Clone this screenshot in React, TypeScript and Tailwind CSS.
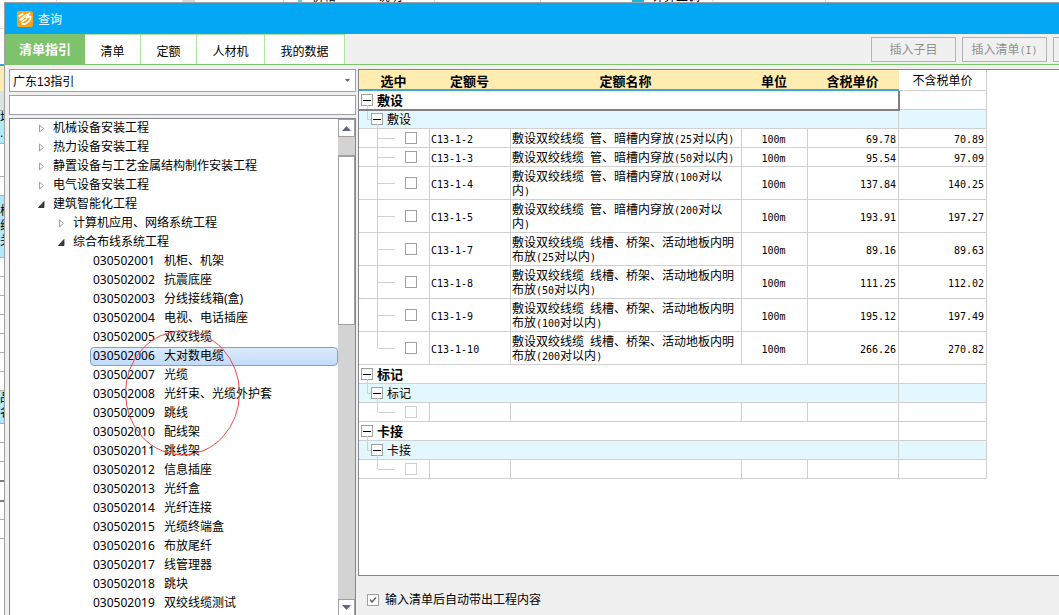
import { Fragment, useState } from 'react'

const tabs = [
  { label: '清单指引', width: 'w-[80px]' },
  { label: '清单', width: 'w-[56px]' },
  { label: '定额', width: 'w-[56px]' },
  { label: '人材机', width: 'w-[68px]' },
  { label: '我的数据', width: 'w-[80px]' },
]

const branches = [
  { label: '机械设备安装工程', level: 1, open: false },
  { label: '热力设备安装工程', level: 1, open: false },
  { label: '静置设备与工艺金属结构制作安装工程', level: 1, open: false },
  { label: '电气设备安装工程', level: 1, open: false },
  { label: '建筑智能化工程', level: 1, open: true },
  { label: '计算机应用、网络系统工程', level: 2, open: false },
  { label: '综合布线系统工程', level: 2, open: true },
]

const leaves = [
  { code: '030502001', name: '机柜、机架' },
  { code: '030502002', name: '抗震底座' },
  { code: '030502003', name: '分线接线箱(盒)' },
  { code: '030502004', name: '电视、电话插座' },
  { code: '030502005', name: '双绞线缆' },
  { code: '030502006', name: '大对数电缆' },
  { code: '030502007', name: '光缆' },
  { code: '030502008', name: '光纤束、光缆外护套' },
  { code: '030502009', name: '跳线' },
  { code: '030502010', name: '配线架' },
  { code: '030502011', name: '跳线架' },
  { code: '030502012', name: '信息插座' },
  { code: '030502013', name: '光纤盒' },
  { code: '030502014', name: '光纤连接' },
  { code: '030502015', name: '光缆终端盒' },
  { code: '030502016', name: '布放尾纤' },
  { code: '030502017', name: '线管理器' },
  { code: '030502018', name: '跳块' },
  { code: '030502019', name: '双绞线缆测试' },
]

type Item = { code: string; name: string; unit: string; taxed: string; untaxed: string }

const emptyItem: Item = { code: '', name: '', unit: '', taxed: '', untaxed: '' }

const groups: { title: string; items: Item[] }[] = [
  {
    title: '敷设',
    items: [
      { code: 'C13-1-2', name: '敷设双绞线缆 管、暗槽内穿放(25对以内)', unit: '100m', taxed: '69.78', untaxed: '70.89' },
      { code: 'C13-1-3', name: '敷设双绞线缆 管、暗槽内穿放(50对以内)', unit: '100m', taxed: '95.54', untaxed: '97.09' },
      { code: 'C13-1-4', name: '敷设双绞线缆 管、暗槽内穿放(100对以\n内)', unit: '100m', taxed: '137.84', untaxed: '140.25' },
      { code: 'C13-1-5', name: '敷设双绞线缆 管、暗槽内穿放(200对以\n内)', unit: '100m', taxed: '193.91', untaxed: '197.27' },
      { code: 'C13-1-7', name: '敷设双绞线缆 线槽、桥架、活动地板内明\n布放(25对以内)', unit: '100m', taxed: '89.16', untaxed: '89.63' },
      { code: 'C13-1-8', name: '敷设双绞线缆 线槽、桥架、活动地板内明\n布放(50对以内)', unit: '100m', taxed: '111.25', untaxed: '112.02' },
      { code: 'C13-1-9', name: '敷设双绞线缆 线槽、桥架、活动地板内明\n布放(100对以内)', unit: '100m', taxed: '195.12', untaxed: '197.49' },
      { code: 'C13-1-10', name: '敷设双绞线缆 线槽、桥架、活动地板内明\n布放(200对以内)', unit: '100m', taxed: '266.26', untaxed: '270.82' },
    ],
  },
  { title: '标记', items: [emptyItem] },
  { title: '卡接', items: [emptyItem] },
]

// main window peeking out left of the dialog
const backRows = [
  { cls: 'h-[29px] border-b border-[#e0e0e0]', text: '' },
  { cls: 'h-[37px] border-b-2 border-[#2ea7e0]', text: '' },
  { cls: 'h-[25px] bg-[#ffecb0]', text: '' },
  { cls: 'h-[20px] bg-[#dae3df] border-b border-[#b0b0b0]', text: '' },
  { cls: 'h-[33px] bg-[#b0e8fc] border-b border-[#b0b0b0]', text: '地\n.' },
  { cls: 'h-[33px] border-b border-[#b0b0b0]', text: '' },
  { cls: 'h-[19px] border-b border-[#b0b0b0]', text: '' },
  { cls: 'h-[62px] bg-[#b0e8fc] border-b border-[#b0b0b0] pt-2', text: '校\n线\n关' },
  { cls: 'h-[19px] border-b border-[#b0b0b0]', text: '' },
  { cls: 'h-[19px] border-b border-[#b0b0b0]', text: '' },
  { cls: 'h-[19px] border-b border-[#b0b0b0]', text: '' },
  { cls: 'h-[19px] border-b border-[#b0b0b0]', text: '' },
  { cls: 'h-[19px] border-b border-[#b0b0b0]', text: '' },
  { cls: 'h-[19px] border-b border-[#b0b0b0]', text: '' },
  { cls: 'h-[19px] border-b border-[#b0b0b0]', text: '' },
  { cls: 'h-[33px] bg-[#b0e8fc] border-b border-[#b0b0b0]', text: '品\n名' },
  { cls: 'h-[19px] border-b border-[#b0b0b0]', text: '' },
  { cls: 'h-[19px] border-b border-[#b0b0b0]', text: '' },
  { cls: 'h-[20px] border-b-2 border-[#808080]', text: '' },
  { cls: 'h-[20px] border-b-2 border-[#808080]', text: '' },
  { cls: 'h-[18px] border-b border-[#b0b0b0]', text: '' },
  { cls: 'h-[19px] border-b border-[#b0b0b0]', text: '' },
]

// half-width characters go in a monospace face so that two of them fill one CJK cell
function Mixed({ text }: { text: string }) {
  return (
    <>
      {text.split(/([\x20-\x7e]+)/).map((part, i) =>
        i % 2 ? (
          <span key={i} className="font-['DejaVu_Sans_Mono',monospace] text-[10px] leading-none">{part}</span>
        ) : (
          <Fragment key={i}>{part}</Fragment>
        ),
      )}
    </>
  )
}

function Logo() {
  return (
    <svg width="16" height="16" viewBox="0 0 16 16" aria-hidden="true">
      <rect width="16" height="16" rx="2" fill="#f9a11b" />
      <g fill="none" stroke="#fff" strokeLinejoin="round">
        <path d="M1.5 5.5 6.5 2.5 M2.5 9 8 5 4 9.5" strokeWidth="1.8" />
        <path d="M8.5 4 12.5 2.5 9.5 6.5 13.5 5.5 C14 8.5 11 11.5 8 13 L4.5 12.8" strokeWidth="1.8" />
        <path d="M4.5 11.5 10 7.5" strokeWidth="1.4" />
      </g>
    </svg>
  )
}

function Triangle({ open }: { open: boolean }) {
  return (
    <svg width="7" height="9" viewBox="0 0 7 9" className="mt-0.5 shrink-0" aria-hidden="true">
      {open ? (
        <path d="M6 1.5V7.5H0.5Z" fill="#404040" stroke="#202020" strokeWidth="0.8" />
      ) : (
        <path d="M1.5 1V8L5.5 4.5Z" fill="#fff" stroke="#a0a0a0" />
      )}
    </svg>
  )
}

function ScrollArrow({ up }: { up: boolean }) {
  return (
    <button
      aria-label={up ? '向上滚动' : '向下滚动'}
      className={`flex w-[17px] shrink-0 items-center justify-center border border-[#a0a0a0] bg-white ${
        up ? 'h-[18px]' : 'h-4 border-b-0'
      }`}
    >
      <svg width="9" height="5" viewBox="0 0 9 5" aria-hidden="true">
        <path d={up ? 'M0 5 4.5 0 9 5Z' : 'M0 0H9L4.5 5Z'} fill="#606478" />
      </svg>
    </button>
  )
}

function Expander({ label }: { label: string }) {
  return (
    <button
      aria-label={`折叠${label}`}
      className="relative flex h-3 w-3 shrink-0 items-center justify-center border border-[#a0a0a0] bg-white after:absolute after:top-full after:left-[5px] after:h-1 after:w-px after:bg-[#d0d0d0]"
    >
      <span className="h-px w-2 bg-black" />
    </button>
  )
}

function ItemRow({ item, last }: { item: Item; last: boolean }) {
  const cell = 'border-r border-b border-[#d0d0d0] p-0'
  const textCell = 'border-r border-b border-[#d0d0d0] px-0 pt-0.5 pb-0 leading-[14px]'
  const tall = item.name.includes('\n')
  return (
    <tr className={tall ? 'h-[33px]' : 'h-[19px]'}>
      <td className={cell}>
        <div className={`flex items-center pl-[18px] ${tall ? 'h-8' : 'h-[18px]'}`}>
          <span className={`border-l border-[#d0d0d0] ${last ? 'h-1/2 self-start' : 'self-stretch'}`} />
          <span className="h-px w-[17px] bg-[#d0d0d0]" />
          <input
            type="checkbox"
            aria-label={item.code || '空行'}
            disabled={!item.code}
            className="ml-[10px] h-3 w-3 appearance-none border border-[#a0a0a0] bg-white checked:bg-[#606478] disabled:border-[#d0d0d0]"
          />
        </div>
      </td>
      <td className={`${textCell} pl-px`}><Mixed text={item.code} /></td>
      <td className={`${textCell} pl-px whitespace-pre`}><Mixed text={item.name} /></td>
      <td className={`${textCell} pr-0.5 text-center`}><Mixed text={item.unit} /></td>
      <td className={`${textCell} pr-0.5 text-right`}><Mixed text={item.taxed} /></td>
      <td className={`${textCell} pr-0.5 text-right`}><Mixed text={item.untaxed} /></td>
    </tr>
  )
}

function QuotaTable() {
  const head = 'border-b-2 border-[#3fa6d8] bg-[#ffecb0] px-0 pt-1 pr-0.5 pb-0 text-[13px] leading-[15px] font-bold'
  return (
    <table className="w-[628px] table-fixed border-separate border-spacing-0 text-xs leading-4">
      <colgroup>
        <col className="w-[71px]" />
        <col className="w-[81px]" />
        <col className="w-[231px]" />
        <col className="w-[66px]" />
        <col className="w-[91px]" />
        <col className="w-[88px]" />
      </colgroup>
      <thead>
        <tr className="h-[21px]">
          <th className={head}>选中</th>
          <th className={head}>定额号</th>
          <th className={head}>定额名称</th>
          <th className={head}>单位</th>
          <th className={head}>含税单价</th>
          <th className="border-r border-b border-[#d0d0d0] p-0 pt-0.5 font-normal">不含税单价</th>
        </tr>
      </thead>
      <tbody>
        {groups.map((group, g) => (
          <Fragment key={group.title}>
            <tr className="h-[19px]">
              <td colSpan={5} className="relative border-r border-b border-[#d0d0d0] p-0">
                <div className="flex h-[18px] items-center gap-1 pl-0.5 text-[13px] font-bold">
                  <Expander label={group.title} />
                  <span className="pt-0.5">{group.title}</span>
                </div>
                {g === 0 && (
                  <span className="pointer-events-none absolute inset-0 -right-0.5 -bottom-0.5 z-10 border-r-2 border-b-2 border-[#808080]" />
                )}
              </td>
              <td className="border-r border-b border-[#d0d0d0] p-0" />
            </tr>
            <tr className="h-[19px] bg-[#e3f7ff]">
              <td colSpan={5} className="border-r border-b border-[#d0d0d0] p-0">
                <div className="flex h-[18px] items-center pl-2">
                  <span className="h-[10px] w-1 self-start border-b border-l border-[#d0d0d0]" />
                  <Expander label={group.title} />
                  <span className="pt-0.5 pl-1">{group.title}</span>
                </div>
              </td>
              <td className="border-r border-b border-[#d0d0d0] p-0" />
            </tr>
            {group.items.map((item, i) => (
              <ItemRow key={i} item={item} last={i === group.items.length - 1} />
            ))}
          </Fragment>
        ))}
      </tbody>
    </table>
  )
}

function ListTree() {
  const [selected, setSelected] = useState('030502006')

  return (
    <div className="relative flex min-h-0 flex-1 border border-b-0 border-[#828790] bg-white">
      <ul className="min-w-0 flex-1 overflow-hidden font-['Noto_Sans','Noto_Sans_CJK_SC',sans-serif] text-xs leading-4">
        {branches.map((node) => (
          <li
            key={node.label}
            className={`flex h-[19px] items-center gap-2 pb-0.5 whitespace-nowrap ${node.level === 1 ? 'pl-7' : 'pl-12'}`}
          >
            <Triangle open={node.open} />
            {node.label}
          </li>
        ))}
        {leaves.map((leaf) => (
          <li
            key={leaf.code}
            onClick={() => setSelected(leaf.code)}
            className={`ml-20 flex h-[19px] items-center rounded-sm border pb-0.5 pl-0.5 whitespace-nowrap ${
              leaf.code === selected
                ? 'border-[#7da2ce] bg-linear-to-b from-[#dcebfc] to-[#c1dbfc]'
                : 'border-transparent'
            }`}
          >
            <span className="w-[71px]">{leaf.code}</span>
            {leaf.name}
          </li>
        ))}
      </ul>
      <div className="flex w-[17px] flex-col bg-[#d3d3d3]">
        <ScrollArrow up />
        <div className="h-[18px]" />
        <div className="h-[170px] border border-t-2 border-[#a0a0a0] bg-white" />
        <div className="flex-1" />
        <ScrollArrow up={false} />
      </div>
      {/* hand-drawn mark around the cable entries */}
      <svg
        className="pointer-events-none absolute top-[211px] left-[115px]"
        width="116"
        height="126"
        viewBox="0 0 116 126"
        aria-hidden="true"
      >
        <ellipse cx="57.5" cy="63" rx="57" ry="62" fill="none" stroke="#f04848" />
      </svg>
    </div>
  )
}

export default function App() {
  const [active, setActive] = useState('清单指引')

  return (
    <div className="flex h-screen overflow-hidden bg-white font-['Liberation_Sans','Noto_Sans_CJK_SC',sans-serif] text-xs text-black">
      <div className="w-1 shrink-0 overflow-hidden">
        {backRows.map((row, i) => (
          <div key={i} className={`overflow-hidden leading-[15px] whitespace-pre ${row.cls}`}>
            {row.text}
          </div>
        ))}
      </div>

      <div className="flex min-w-0 flex-1 flex-col">
        <div className="flex h-0.5 shrink-0 items-end overflow-hidden bg-white">
          <span className="ml-[52px] h-full w-px bg-[#d8d8d8]" />
          <span className="ml-[125px] h-full w-[13px] bg-[#d8d8d8]" />
          <span className="ml-[88px] h-full w-px bg-[#d8d8d8]" />
          <span className="ml-[14px] h-full w-1 bg-[#5fd0f0]" />
          <span className="ml-[10px] w-[66px] leading-[10px]">价格</span>
          <span className="w-[56px] leading-[10px]">说明</span>
          <span className="h-full w-px bg-[#d8d8d8]" />
          <span className="ml-[105px] h-full w-px bg-[#d8d8d8]" />
          <span className="ml-[91px] h-full w-3 bg-[#18b4e8]" />
          <span className="ml-2 w-[60px] leading-[10px]">计算上调</span>
          <span className="h-full w-px bg-[#d8d8d8]" />
          <span className="ml-[112px] h-full w-px bg-[#d8d8d8]" />
        </div>

        <div className="flex min-h-0 flex-1 flex-col border-t border-l border-[#a0a0a0] bg-[#f0f0f0]">
          <header className="flex h-[31px] shrink-0 items-center gap-[5px] bg-[#02a8f3] pl-3 text-white">
            <Logo />
            <h1 className="pt-0.5">查询</h1>
          </header>

          <div className="flex h-[31px] shrink-0 justify-between overflow-hidden border-b border-[#7dc36b]">
            <nav className="flex">
              {tabs.map((tab) => (
                <button
                  key={tab.label}
                  onClick={() => setActive(tab.label)}
                  className={`${tab.width} ${
                    tab.label === active
                      ? 'bg-[#7dc36b] pt-0.5 text-[13px] font-bold text-white'
                      : 'border-t border-r border-[#b0e5a0] bg-white pt-1'
                  }`}
                >
                  {tab.label}
                </button>
              ))}
            </nav>
            <div className="-mr-[79px] flex items-center gap-1.5 pt-px">
              <button disabled className="h-[25px] w-[85px] border border-[#b4b4b4] pt-px text-[#909090]">插入子目</button>
              <button disabled className="h-[25px] w-[85px] border border-[#b4b4b4] pt-px text-[#909090]">
                <Mixed text="插入清单(I)" />
              </button>
              <button disabled aria-label="更多" className="h-[25px] w-[85px] border border-[#b4b4b4]" />
            </div>
          </div>

          <div className="flex min-h-0 flex-1 gap-0.5 pt-1 pl-1">
            <aside className="flex w-[347px] shrink-0 flex-col">
              <div className="relative">
                <select
                  aria-label="清单指引库"
                  className="block h-[23px] w-full appearance-none border border-[#a0a0a0] bg-white pt-0.5 pl-[3px]"
                >
                  <option>广东13指引</option>
                </select>
                <svg className="pointer-events-none absolute top-[10px] right-[6px]" width="5" height="3" viewBox="0 0 5 3" aria-hidden="true">
                  <path d="M0 0H5L2.5 3Z" fill="#606478" />
                </svg>
              </div>
              <input
                type="text"
                aria-label="搜索"
                className="my-[3px] h-5 w-full border border-[#a0a0a0] bg-white px-1 outline-none"
              />
              <ListTree />
            </aside>

            <main className="flex min-w-0 flex-1 flex-col">
              <div className="min-h-0 flex-1 overflow-hidden border-y border-l border-[#828790] bg-white">
                <QuotaTable />
              </div>
              <label className="flex h-[39px] shrink-0 items-center gap-1.5 pt-2 pl-[9px]">
                <span className="relative flex">
                  <input
                    type="checkbox"
                    defaultChecked
                    className="peer h-3 w-3 appearance-none border border-[#a0a0a0] bg-white"
                  />
                  <svg
                    className="pointer-events-none absolute inset-0 hidden peer-checked:block"
                    width="12"
                    height="12"
                    viewBox="0 0 12 12"
                    aria-hidden="true"
                  >
                    <path d="M3 5.5 5 8 9 3.5" fill="none" stroke="#606478" strokeWidth="1.5" />
                  </svg>
                </span>
                输入清单后自动带出工程内容
              </label>
            </main>
          </div>
        </div>
      </div>
    </div>
  )
}
